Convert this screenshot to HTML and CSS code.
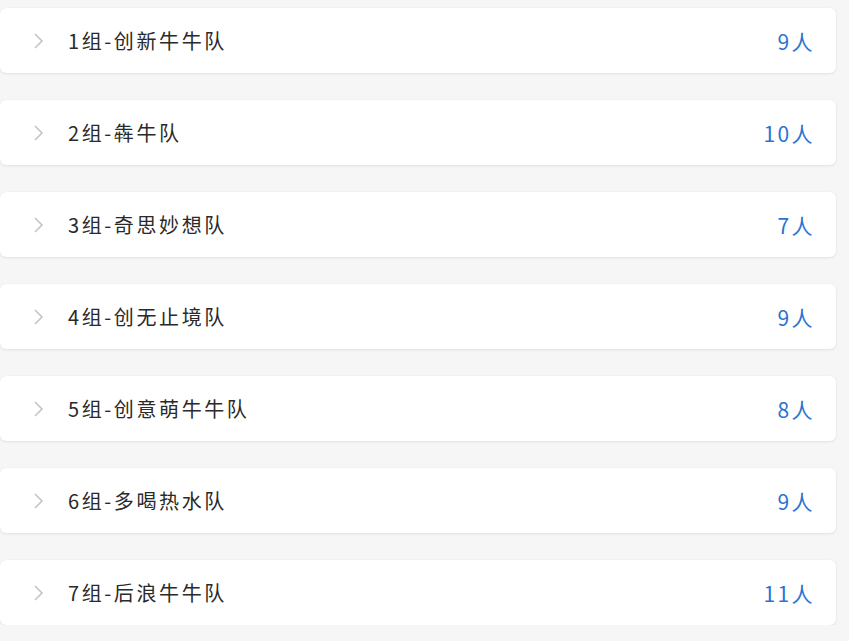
FILE: index.html
```html
<!DOCTYPE html>
<html lang="zh">
<head>
<meta charset="utf-8">
<link rel="stylesheet" href="styles.css">
</head>
<body>
<ul class="list">
  <li class="card"><svg class="chev" viewBox="0 0 12 18"><path d="M2 2l7 7-7 7"/></svg><span class="name">1组-创新牛牛队</span><span class="count">9人</span></li>
  <li class="card"><svg class="chev" viewBox="0 0 12 18"><path d="M2 2l7 7-7 7"/></svg><span class="name">2组-犇牛队</span><span class="count">10人</span></li>
  <li class="card"><svg class="chev" viewBox="0 0 12 18"><path d="M2 2l7 7-7 7"/></svg><span class="name">3组-奇思妙想队</span><span class="count">7人</span></li>
  <li class="card"><svg class="chev" viewBox="0 0 12 18"><path d="M2 2l7 7-7 7"/></svg><span class="name">4组-创无止境队</span><span class="count">9人</span></li>
  <li class="card"><svg class="chev" viewBox="0 0 12 18"><path d="M2 2l7 7-7 7"/></svg><span class="name">5组-创意萌牛牛队</span><span class="count">8人</span></li>
  <li class="card"><svg class="chev" viewBox="0 0 12 18"><path d="M2 2l7 7-7 7"/></svg><span class="name">6组-多喝热水队</span><span class="count">9人</span></li>
  <li class="card"><svg class="chev" viewBox="0 0 12 18"><path d="M2 2l7 7-7 7"/></svg><span class="name">7组-后浪牛牛队</span><span class="count">11人</span></li>
</ul>
</body>
</html>
```
FILE: styles.css
```css
html, body {
  margin: 0;
  padding: 0;
  background: #f6f6f7;
  font-family: "Noto Sans CJK SC", "Noto Sans", sans-serif;
}
.list {
  list-style: none;
  margin: 0;
  padding: 8px 0 0 0;
  display: flex;
  flex-direction: column;
  gap: 27px;
  width: 836px;
}
.card {
  height: 65px;
  box-sizing: border-box;
  background: #fff;
  border-radius: 6px;
  box-shadow: 0 1px 3px rgba(0,0,0,0.08), 0 0 1px rgba(0,0,0,0.08);
  display: flex;
  align-items: center;
  padding: 0 21px 0 33px;
}
.chev {
  width: 12px;
  height: 18px;
  fill: none;
  stroke: #c4c4c4;
  stroke-width: 1.6;
  margin-right: 23px;
}
.name {
  flex: 1;
  font-size: 20px;
  color: #2a2a2a;
  letter-spacing: 2.6px;
}
.count {
  font-size: 21px;
  color: #2b72d3;
  letter-spacing: 2.4px;
}
```
